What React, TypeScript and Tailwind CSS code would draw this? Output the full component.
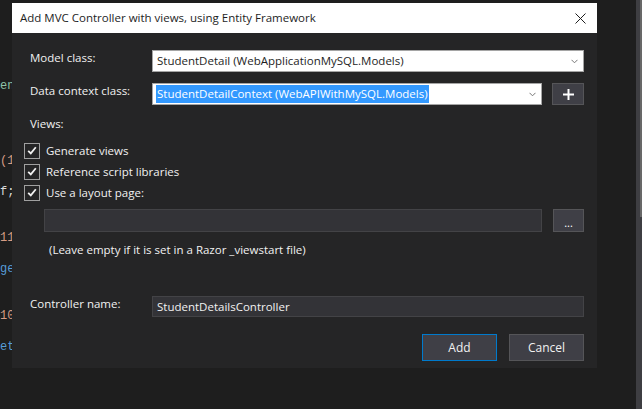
import React from 'react'

const ui = { fontFamily: '"Open Sans", "Noto Sans", sans-serif' }
const mono = { fontFamily: '"Liberation Mono", "DejaVu Sans Mono", monospace' }

function Chevron() {
  return (
    <svg width="7" height="5" viewBox="0 0 7 5" className="shrink-0">
      <polyline points="0.5,0.8 3.5,3.8 6.5,0.8" fill="none" stroke="#777" strokeWidth="1" />
    </svg>
  )
}

function Check() {
  return (
    <span className="w-[16px] h-[16px] border border-[#a0a0a0] bg-[#252526] flex items-center justify-center shrink-0">
      <svg width="10" height="9" viewBox="0 0 10 9">
        <polyline points="1.2,4.8 3.8,7.4 8.8,1.2" fill="none" stroke="#f1f1f1" strokeWidth="1.8" />
      </svg>
    </span>
  )
}

// bits of the code editor peeking out from behind the dialog
const codeLines: { gap: number; text: string; color: string }[] = [
  { gap: 0, text: 'ene', color: '#8ec3a8' },
  { gap: 4, text: '(1', color: '#d69d85' },
  { gap: 1, text: 'f;', color: '#dcdcdc' },
  { gap: 2, text: '11', color: '#d69d85' },
  { gap: 1, text: 'ge', color: '#569cd6' },
  { gap: 2, text: '10', color: '#d69d85' },
  { gap: 1, text: 'et', color: '#569cd6' },
]

export default function App() {
  return (
    <div className="w-[642px] h-[409px] bg-[#1e1e1e] flex overflow-hidden" style={ui}>
      {/* editor strip */}
      <div className="w-[12px] shrink-0 overflow-hidden pt-[79px] text-[12px] leading-[15.5px]" style={mono}>
        {codeLines.map((l, i) => (
          <div key={i} style={{ marginTop: l.gap * 15.5 - (i === 1 ? 3 : 0), color: l.color }} className="whitespace-nowrap">
            {l.text}
          </div>
        ))}
      </div>

      {/* dialog */}
      <div className="w-[585px] h-[365px] mt-[3px] bg-[#252526] flex flex-col shrink-0">
        <div className="h-[30px] bg-white flex items-center justify-between pl-[8px] pr-[11px] shrink-0">
          <span className="text-[11.5px] text-[#1e1e1e]">Add MVC Controller with views, using Entity Framework</span>
          <svg width="11" height="11" viewBox="0 0 11 11">
            <line x1="0.5" y1="0.5" x2="10.5" y2="10.5" stroke="#1e1e1e" strokeWidth="1" />
            <line x1="10.5" y1="0.5" x2="0.5" y2="10.5" stroke="#1e1e1e" strokeWidth="1" />
          </svg>
        </div>

        <div className="flex flex-col pr-[13px] text-[11.5px] text-[#f1f1f1]">
          {/* model class */}
          <div className="mt-[17px] h-[22px] flex">
            <span className="w-[122px] ml-[18px] leading-[16px]">Model class:</span>
            <div className="flex-1 bg-white border border-[#a5a5a5] flex items-center justify-between pl-[4px] pr-[5px]">
              <span className="text-[#1e1e1e]">StudentDetail (WebApplicationMySQL.Models)</span>
              <Chevron />
            </div>
          </div>

          {/* data context */}
          <div className="mt-[11px] h-[22px] flex">
            <span className="w-[122px] ml-[18px] leading-[16px]">Data context class:</span>
            <div className="flex-1 bg-white border border-[#a5a5a5] flex items-center justify-between pl-[3px] pr-[5px]">
              <span className="bg-[#3399ff] text-white leading-[18px] px-[1px]">StudentDetailContext (WebAPIWithMySQL.Models)</span>
              <Chevron />
            </div>
            <button className="ml-[10px] w-[32px] bg-[#3f3f46] border border-[#555558] flex items-center justify-center">
              <svg width="11" height="11" viewBox="0 0 11 11">
                <line x1="5.5" y1="0" x2="5.5" y2="11" stroke="#fff" strokeWidth="2" />
                <line x1="0" y1="5.5" x2="11" y2="5.5" stroke="#fff" strokeWidth="2" />
              </svg>
            </button>
          </div>

          <span className="mt-[11px] h-[16px] ml-[18px] leading-[16px]">Views:</span>

          <div className="mt-[8px] flex flex-col ml-[12px]">
            {['Generate views', 'Reference script libraries', 'Use a layout page:'].map((t) => (
              <div key={t} className="h-[21px] flex items-center gap-[6px]">
                <Check />
                <span className="leading-[16px]">{t}</span>
              </div>
            ))}
          </div>

          {/* layout page path */}
          <div className="mt-[6px] h-[23px] flex ml-[32px]">
            <div className="flex-1 bg-[#333337] border border-[#434346]" />
            <button className="ml-[11px] w-[31px] bg-[#3f3f46] border border-[#555558] text-white text-[11px] leading-[10px] pt-[4px]">...</button>
          </div>

          <span className="mt-[10px] h-[16px] ml-[37px] leading-[16px]">(Leave empty if it is set in a Razor _viewstart file)</span>

          {/* controller name */}
          <div className="mt-[38px] h-[21px] flex">
            <span className="w-[122px] ml-[18px] leading-[16px]">Controller name:</span>
            <div className="flex-1 bg-[#333337] border border-[#434346] flex items-center pl-[4px]">
              <span>StudentDetailsController</span>
            </div>
          </div>

          {/* buttons */}
          <div className="mt-[17px] h-[27px] flex justify-end gap-[12px]">
            <button className="w-[75px] bg-[#3f3f46] border border-[#007acc] text-[#f1f1f1] text-[12px]">Add</button>
            <button className="w-[75px] bg-[#3f3f46] border border-[#555558] text-[#f1f1f1] text-[12px]">Cancel</button>
          </div>
        </div>
      </div>

      {/* editor gutter and scrollbar */}
      <div className="flex-1" />
      <div className="w-[6px] h-full bg-[#3e3e42] flex justify-end shrink-0">
        <div className="w-[2px] h-[217px] bg-[#686868]" />
      </div>
    </div>
  )
}
